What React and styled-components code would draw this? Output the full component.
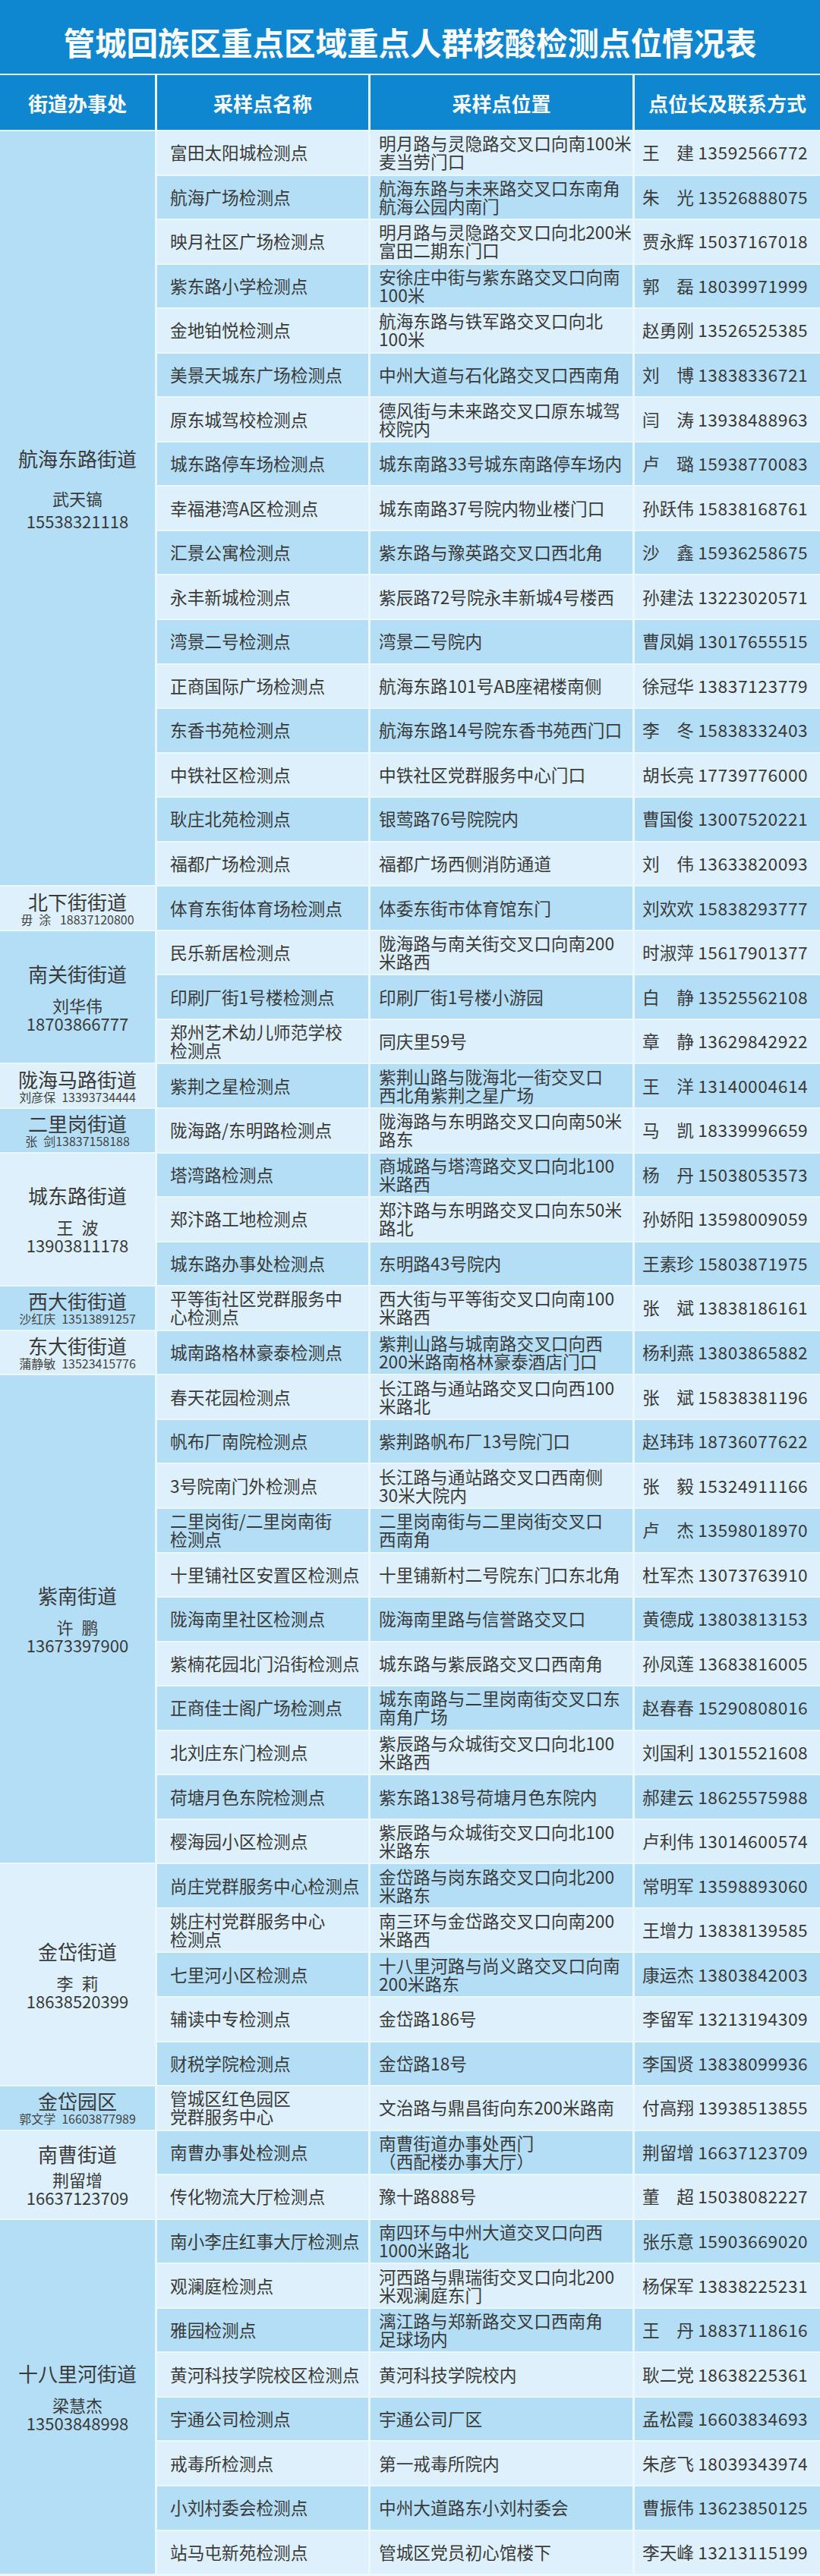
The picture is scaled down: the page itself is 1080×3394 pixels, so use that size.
import styled, { createGlobalStyle } from "styled-components";

const BLUE = '#0e86d0';
const LINE = '#eaf7fd';
const LIGHT = '#ddf0fb';
const DARK = '#b3def6';

const GlobalStyle = createGlobalStyle`
  html, body {
    margin: 0;
    padding: 0;
    background: ${LINE};
  }
  body {
    font-family: "Noto Sans CJK SC", "Noto Sans", sans-serif;
    color: #3a3a3a;
  }
`;

const Page = styled.div`
  width: 1080px;
  background: ${LINE};
`;

const TitleBar = styled.h1`
  margin: 0 0 2px;
  height: 97px;
  box-sizing: border-box;
  padding-top: 12px;
  display: flex;
  align-items: center;
  justify-content: center;
  background: ${BLUE};
  color: #fff;
  font-size: 41.5px;
  font-weight: 700;
`;

const Table = styled.div`
  display: grid;
  grid-template-columns: 204px 278px 345px 1fr;
  grid-template-rows: 72px;
  grid-auto-rows: 56.56px;
  gap: 2px 3px;
  padding-bottom: 2px;
  background: ${LINE};
`;

const HeadCell = styled.div`
  display: flex;
  align-items: center;
  justify-content: center;
  background: ${BLUE};
  color: #fff;
  font-size: 26px;
  font-weight: 700;
`;

const DistrictCell = styled.div`
  grid-column: 1;
  grid-row: span ${props => props.$span};
  display: flex;
  flex-direction: column;
  align-items: center;
  justify-content: center;
  box-sizing: border-box;
  padding-bottom: ${props => props.$lift || 0}px;
  background: ${props => props.$dark ? DARK : LIGHT};
  text-align: center;
`;

const DistrictName = styled.div`
  font-size: 26px;
  line-height: ${props => props.$compact ? 28 : 30}px;
`;

// name and phone of the street chief, one line each
const Chief = styled.div`
  margin-top: ${props => props.$gap}px;
  font-size: 22px;
  line-height: ${props => props.$lh || 24}px;
  white-space: pre;
`;

const ChiefInline = styled.div`
  font-size: 16px;
  line-height: 18px;
  white-space: pre;
  color: #444;
`;

const Cell = styled.div`
  grid-column: ${props => props.$col};
  display: flex;
  align-items: center;
  padding-left: ${props => props.$pad}px;
  background: ${props => props.$dark ? DARK : LIGHT};
  font-size: 22.7px;
  line-height: 24px;
  white-space: pre;
`;

const Phone = styled.span`
  letter-spacing: 0.6px;
`;

const groups = [
  {
    name: '航海东路街道', chief: '武天镐', phone: '15538321118', dark: true, gap: 22, lh: 30, lift: 50,
    rows: [
      ['富田太阳城检测点', '明月路与灵隐路交叉口向南100米\n麦当劳门口', '王　建', '13592566772'],
      ['航海广场检测点', '航海东路与未来路交叉口东南角\n航海公园内南门', '朱　光', '13526888075'],
      ['映月社区广场检测点', '明月路与灵隐路交叉口向北200米\n富田二期东门口', '贾永辉', '15037167018'],
      ['紫东路小学检测点', '安徐庄中街与紫东路交叉口向南\n100米', '郭　磊', '18039971999'],
      ['金地铂悦检测点', '航海东路与铁军路交叉口向北\n100米', '赵勇刚', '13526525385'],
      ['美景天城东广场检测点', '中州大道与石化路交叉口西南角', '刘　博', '13838336721'],
      ['原东城驾校检测点', '德风街与未来路交叉口原东城驾\n校院内', '闫　涛', '13938488963'],
      ['城东路停车场检测点', '城东南路33号城东南路停车场内', '卢　璐', '15938770083'],
      ['幸福港湾A区检测点', '城东南路37号院内物业楼门口', '孙跃伟', '15838168761'],
      ['汇景公寓检测点', '紫东路与豫英路交叉口西北角', '沙　鑫', '15936258675'],
      ['永丰新城检测点', '紫辰路72号院永丰新城4号楼西', '孙建法', '13223020571'],
      ['湾景二号检测点', '湾景二号院内', '曹凤娟', '13017655515'],
      ['正商国际广场检测点', '航海东路101号AB座裙楼南侧', '徐冠华', '13837123779'],
      ['东香书苑检测点', '航海东路14号院东香书苑西门口', '李　冬', '15838332403'],
      ['中铁社区检测点', '中铁社区党群服务中心门口', '胡长亮', '17739776000'],
      ['耿庄北苑检测点', '银莺路76号院院内', '曹国俊', '13007520221'],
      ['福都广场检测点', '福都广场西侧消防通道', '刘　伟', '13633820093'],
    ],
  },
  {
    name: '北下街街道', inline: '毋\u2002涂\u2002 18837120800', dark: false,
    rows: [
      ['体育东街体育场检测点', '体委东街市体育馆东门', '刘欢欢', '15838293777'],
    ],
  },
  {
    name: '南关街街道', chief: '刘华伟', phone: '18703866777', dark: true, gap: 14,
    rows: [
      ['民乐新居检测点', '陇海路与南关街交叉口向南200\n米路西', '时淑萍', '15617901377'],
      ['印刷厂街1号楼检测点', '印刷厂街1号楼小游园', '白　静', '13525562108'],
      ['郑州艺术幼儿师范学校\n检测点', '同庆里59号', '章　静', '13629842922'],
    ],
  },
  {
    name: '陇海马路街道', inline: '刘彦保\u200213393734444', dark: false,
    rows: [
      ['紫荆之星检测点', '紫荆山路与陇海北一街交叉口\n西北角紫荆之星广场', '王　洋', '13140004614'],
    ],
  },
  {
    name: '二里岗街道', inline: '张\u2002剑13837158188', dark: true,
    rows: [
      ['陇海路/东明路检测点', '陇海路与东明路交叉口向南50米\n路东', '马　凯', '18339996659'],
    ],
  },
  {
    name: '城东路街道', chief: '王\u2002波', phone: '13903811178', dark: false, gap: 14,
    rows: [
      ['塔湾路检测点', '商城路与塔湾路交叉口向北100\n米路西', '杨　丹', '15038053573'],
      ['郑汴路工地检测点', '郑汴路与东明路交叉口向东50米\n路北', '孙娇阳', '13598009059'],
      ['城东路办事处检测点', '东明路43号院内', '王素珍', '15803871975'],
    ],
  },
  {
    name: '西大街街道', inline: '沙红庆\u200213513891257', dark: true,
    rows: [
      ['平等街社区党群服务中\n心检测点', '西大街与平等街交叉口向南100\n米路西', '张　斌', '13838186161'],
    ],
  },
  {
    name: '东大街街道', inline: '蒲静敏\u200213523415776', dark: false,
    rows: [
      ['城南路格林豪泰检测点', '紫荆山路与城南路交叉口向西\n200米路南格林豪泰酒店门口', '杨利燕', '13803865882'],
    ],
  },
  {
    name: '紫南街道', chief: '许\u2002鹏', phone: '13673397900', dark: true, gap: 14,
    rows: [
      ['春天花园检测点', '长江路与通站路交叉口向西100\n米路北', '张　斌', '15838381196'],
      ['帆布厂南院检测点', '紫荆路帆布厂13号院门口', '赵玮玮', '18736077622'],
      ['3号院南门外检测点', '长江路与通站路交叉口西南侧\n30米大院内', '张　毅', '15324911166'],
      ['二里岗街/二里岗南街\n检测点', '二里岗南街与二里岗街交叉口\n西南角', '卢　杰', '13598018970'],
      ['十里铺社区安置区检测点', '十里铺新村二号院东门口东北角', '杜军杰', '13073763910'],
      ['陇海南里社区检测点', '陇海南里路与信誉路交叉口', '黄德成', '13803813153'],
      ['紫楠花园北门沿街检测点', '城东路与紫辰路交叉口西南角', '孙凤莲', '13683816005'],
      ['正商佳士阁广场检测点', '城东南路与二里岗南街交叉口东\n南角广场', '赵春春', '15290808016'],
      ['北刘庄东门检测点', '紫辰路与众城街交叉口向北100\n米路西', '刘国利', '13015521608'],
      ['荷塘月色东院检测点', '紫东路138号荷塘月色东院内', '郝建云', '18625575988'],
      ['樱海园小区检测点', '紫辰路与众城街交叉口向北100\n米路东', '卢利伟', '13014600574'],
    ],
  },
  {
    name: '金岱街道', chief: '李\u2002莉', phone: '18638520399', dark: false, gap: 14,
    rows: [
      ['尚庄党群服务中心检测点', '金岱路与岗东路交叉口向北200\n米路东', '常明军', '13598893060'],
      ['姚庄村党群服务中心\n检测点', '南三环与金岱路交叉口向南200\n米路西', '王增力', '13838139585'],
      ['七里河小区检测点', '十八里河路与尚义路交叉口向南\n200米路东', '康运杰', '13803842003'],
      ['辅读中专检测点', '金岱路186号', '李留军', '13213194309'],
      ['财税学院检测点', '金岱路18号', '李国贤', '13838099936'],
    ],
  },
  {
    name: '金岱园区', inline: '郭文学\u200216603877989', dark: true,
    rows: [
      ['管城区红色园区\n党群服务中心', '文治路与鼎昌街向东200米路南', '付高翔', '13938513855'],
    ],
  },
  {
    name: '南曹街道', chief: '荆留增', phone: '16637123709', dark: false, gap: 6,
    rows: [
      ['南曹办事处检测点', '南曹街道办事处西门\n（西配楼办事大厅）', '荆留增', '16637123709'],
      ['传化物流大厅检测点', '豫十路888号', '董　超', '15038082227'],
    ],
  },
  {
    name: '十八里河街道', chief: '梁慧杰', phone: '13503848998', dark: true, gap: 14,
    rows: [
      ['南小李庄红事大厅检测点', '南四环与中州大道交叉口向西\n1000米路北', '张乐意', '15903669020'],
      ['观澜庭检测点', '河西路与鼎瑞街交叉口向北200\n米观澜庭东门', '杨保军', '13838225231'],
      ['雅园检测点', '漓江路与郑新路交叉口西南角\n足球场内', '王　丹', '18837118616'],
      ['黄河科技学院校区检测点', '黄河科技学院校内', '耿二党', '18638225361'],
      ['宇通公司检测点', '宇通公司厂区', '孟松霞', '16603834693'],
      ['戒毒所检测点', '第一戒毒所院内', '朱彦飞', '18039343974'],
      ['小刘村委会检测点', '中州大道路东小刘村委会', '曹振伟', '13623850125'],
      ['站马屯新苑检测点', '管城区党员初心馆楼下', '李天峰', '13213115199'],
    ],
  },
];

const District = ({ group }) => (
  <DistrictCell $span={group.rows.length} $dark={group.dark} $lift={group.lift}>
    <DistrictName $compact={!!group.inline}>{group.name}</DistrictName>
    {group.inline ? (
      <ChiefInline>{group.inline}</ChiefInline>
    ) : (
      <Chief $gap={group.gap} $lh={group.lh}>{group.chief + '\n' + group.phone}</Chief>
    )}
  </DistrictCell>
);

const App = () => {
  let index = 0;
  return (
    <Page>
      <GlobalStyle />
      <TitleBar>管城回族区重点区域重点人群核酸检测点位情况表</TitleBar>
      <Table>
        <HeadCell>街道办事处</HeadCell>
        <HeadCell>采样点名称</HeadCell>
        <HeadCell>采样点位置</HeadCell>
        <HeadCell>点位长及联系方式</HeadCell>
        {groups.map(group => [
          <District key={group.name} group={group} />,
          ...group.rows.map(([site, place, person, phone]) => {
            const dark = index++ % 2 === 1;
            return [
              <Cell key={site + 'a'} $col={2} $pad={17} $dark={dark}>{site}</Cell>,
              <Cell key={site + 'b'} $col={3} $pad={11} $dark={dark}>{place}</Cell>,
              <Cell key={site + 'c'} $col={4} $pad={10} $dark={dark}>
                {person} <Phone>{phone}</Phone>
              </Cell>,
            ];
          }),
        ])}
      </Table>
    </Page>
  );
};

export default App;
